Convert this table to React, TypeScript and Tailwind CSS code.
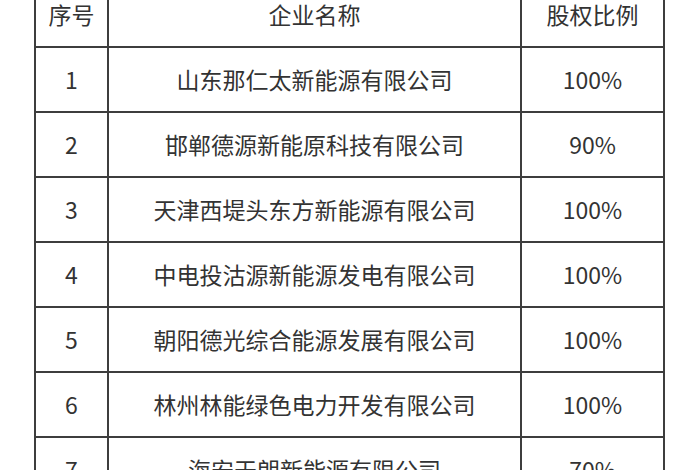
import React from 'react';

const rows = [
  { no: '1', name: '山东那仁太新能源有限公司', share: '100%' },
  { no: '2', name: '邯郸德源新能原科技有限公司', share: '90%' },
  { no: '3', name: '天津西堤头东方新能源有限公司', share: '100%' },
  { no: '4', name: '中电投沽源新能源发电有限公司', share: '100%' },
  { no: '5', name: '朝阳德光综合能源发展有限公司', share: '100%' },
  { no: '6', name: '林州林能绿色电力开发有限公司', share: '100%' },
  { no: '7', name: '海安天朗新能源有限公司', share: '70%' },
];

const Row = ({ no, name, share }: { no: string; name: string; share: string }) => (
  <div className="flex h-[65px] border-b-2 border-[#3d3d3d]">
    <div className="w-[73px] shrink-0 flex items-center justify-center border-r-2 border-[#3d3d3d]">{no}</div>
    <div className="w-[413px] shrink-0 flex items-center justify-center border-r-2 border-[#3d3d3d]">{name}</div>
    <div className="w-[143px] shrink-0 flex items-center justify-center border-r-2 border-[#3d3d3d]">{share}</div>
  </div>
);

export default function App() {
  return (
    <div className="w-[700px] h-[470px] overflow-hidden bg-white">
      <div
        className="ml-[34px] -mt-[19px] w-max border-l-2 border-t-2 border-[#3d3d3d] text-[23px] text-[#333333]"
        style={{ fontFamily: '"Noto Sans CJK SC", "Noto Sans", sans-serif' }}
      >
        <Row no="序号" name="企业名称" share="股权比例" />
        {rows.map(r => (
          <Row key={r.no} {...r} />
        ))}
      </div>
    </div>
  );
}
